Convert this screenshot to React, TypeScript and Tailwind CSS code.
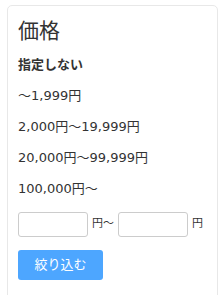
import React from "react";

export default function App() {
  const items = ["〜1,999円", "2,000円〜19,999円", "20,000円〜99,999円", "100,000円〜"];
  return (
    <div className="w-[219px] h-[295px] bg-white overflow-hidden pt-[5px] pl-[7px]" style={{ fontFamily: '"DejaVu Sans", "Noto Sans CJK JP", sans-serif' }}>
      <div className="w-[211px] h-[320px] border border-[#e8e8e8] rounded-[5px] px-[10px] pt-[10px] text-[#333]">
        <div className="text-[21px] leading-[30px] font-normal">価格</div>
        <div className="mt-[9px] text-[13px] font-bold leading-[20px]">指定しない</div>
        <div className="flex flex-col">
          {items.map((t, i) => (
            <div key={t} className={`text-[13px] leading-[20px] ${i === 0 ? "mt-[11px]" : "mt-[11px]"}`}>{t}</div>
          ))}
        </div>
        <div className="mt-[13px] flex items-center text-[11px]">
          <input className="w-[70px] h-[25px] border border-[#ccc] rounded-[3px]" />
          <span className="ml-[4px] mr-[4px]">円〜</span>
          <input className="w-[70px] h-[25px] border border-[#ccc] rounded-[3px]" />
          <span className="ml-[4px]">円</span>
        </div>
        <button className="mt-[13px] w-[85px] h-[30px] bg-[#4da6ff] text-white text-[13px] rounded-[3px]">絞り込む</button>
      </div>
    </div>
  );
}
